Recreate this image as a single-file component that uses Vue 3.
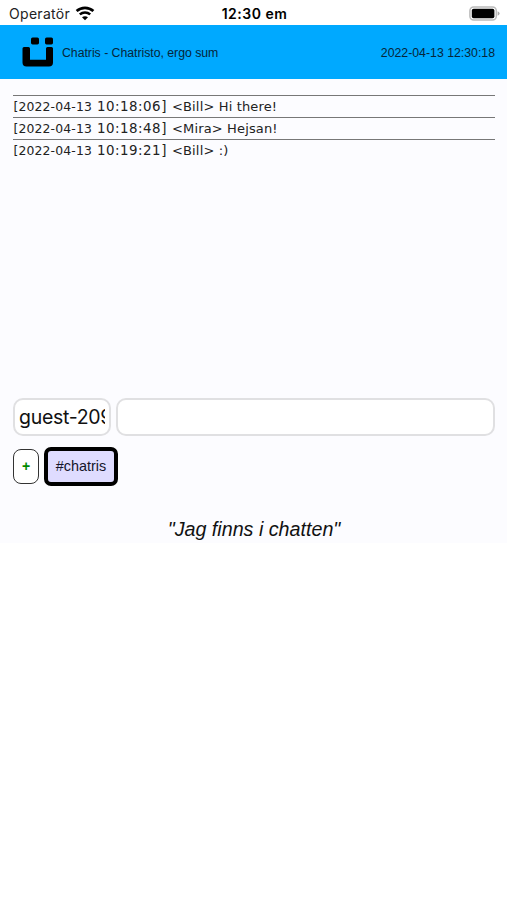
<script setup>
import { ref } from 'vue';

const nick = ref('guest-209');
const message = ref('');
const clock = ref('2022-04-13 12:30:18');

const messages = ref([
  { date: '2022-04-13', time: '10:18:06', nick: 'Bill', text: 'Hi there!' },
  { date: '2022-04-13', time: '10:18:48', nick: 'Mira', text: 'Hejsan!' },
  { date: '2022-04-13', time: '10:19:21', nick: 'Bill', text: ':)' },
]);
</script>

<template>
  <div class="screen">
    <div class="status">
      <div class="carrier">
        <span>Operatör</span>
        <svg width="20" height="15" viewBox="0 0 20 15">
          <path d="M1.6 5.1C6.4 0.8 13.6 0.8 18.4 5.1" fill="none" stroke="#000" stroke-width="2.7" />
          <path d="M4.8 8.4C7.8 5.8 12.2 5.8 15.2 8.4" fill="none" stroke="#000" stroke-width="2.5" />
          <path d="M10 14.2L7 11.3C8.7 9.8 11.3 9.8 13 11.3Z" />
        </svg>
      </div>
      <div class="time">12:30 em</div>
      <div class="battery">
        <svg width="31" height="15" viewBox="0 0 31 15">
          <rect x="0.9" y="0.9" width="26.4" height="13.2" rx="3.8" fill="#fff" stroke="#bbb" stroke-width="1.5" />
          <rect x="2.8" y="2.8" width="22.6" height="9.4" rx="1.8" />
          <path d="M28.6 5.2Q30.6 6 30.6 7.5T28.6 9.8Z" fill="#aaa" />
        </svg>
      </div>
    </div>

    <header>
      <svg width="32" height="30" viewBox="0 0 32 30">
        <rect x="9" y="0.6" width="8" height="6.8" rx="1.6" />
        <rect x="23" y="0.6" width="8" height="6.8" rx="1.6" />
        <path d="M2 10H6.5Q8 10 8 11.5V22.8H24V11.5Q24 10 25.5 10H29.5Q31 10 31 11.5V25.5Q31 29.5 27 29.5H4.5Q0.5 29.5 0.5 25.5V11.5Q0.5 10 2 10Z" />
      </svg>
      <span class="title">Chatris - Chatristo, ergo sum</span>
      <span class="clock">{{ clock }}</span>
    </header>

    <main>
      <div class="log">
        <div v-for="m in messages" :key="m.time" class="row">
          <span class="date">[{{ m.date }}</span>
          <span class="stamp">{{ m.time }}]</span>
          <span>&lt;{{ m.nick }}&gt; {{ m.text }}</span>
        </div>
      </div>

      <div class="inputs">
        <input v-model="nick" class="nick" type="text">
        <input v-model="message" class="message" type="text">
      </div>

      <div class="channels">
        <button class="add">+</button>
        <button class="channel">#chatris</button>
      </div>

      <p class="quote">"Jag finns i chatten"</p>
    </main>
  </div>
</template>

<style>
body {
  background: #fff;
}
</style>

<style scoped>
.screen {
  width: 507px;
  height: 900px;
  overflow: hidden;
  background: #fff;
  color: #000;
  font-family: "Liberation Sans", Arial, sans-serif;
}
.status {
  display: flex;
  align-items: center;
  height: 25px;
  padding: 1px 7px 0 9px;
  box-sizing: border-box;
  font-family: Inter, sans-serif;
  font-size: 14px;
}
.carrier {
  display: flex;
  flex: 1;
  align-items: center;
  gap: 5px;
  color: #222;
  letter-spacing: 0.3px;
}
.time {
  font-weight: 600;
  letter-spacing: 0.5px;
}
.battery {
  display: flex;
  flex: 1;
  justify-content: flex-end;
}
header {
  display: flex;
  align-items: center;
  height: 54px;
  padding: 0 12px 0 22px;
  box-sizing: border-box;
  background: #00a9ff;
  color: #06263a;
  font-size: 12.3px;
}
.title,
.clock {
  padding-top: 1px;
}
.title {
  margin-left: 8px;
  letter-spacing: -0.03px;
}
.clock {
  margin-left: auto;
}
main {
  height: 464px;
  padding: 16px 12px 0 13px;
  box-sizing: border-box;
  background: #fcfcff;
}
.log {
  height: 303px;
}
.row {
  display: flex;
  height: 22px;
  border-top: 1px solid #777;
  box-sizing: border-box;
  font-family: "DejaVu Sans", Verdana, sans-serif;
  font-size: 13px;
  line-height: 21px;
  letter-spacing: 0.15px;
  color: #222;
  white-space: nowrap;
}
.date {
  width: 84px;
  padding-left: 0.5px;
  box-sizing: border-box;
  font-size: 12.4px;
}
.stamp {
  width: 75px;
  font-size: 13.4px;
  letter-spacing: 0.5px;
}
.inputs {
  display: flex;
  gap: 5px;
}
input {
  height: 38px;
  padding: 0 5px;
  box-sizing: border-box;
  border: 2px solid #e0e0e2;
  border-radius: 10px;
  background: #fff;
  color: #111;
  font-family: Inter, sans-serif;
  font-size: 19.5px;
  letter-spacing: -0.3px;
  outline: none;
}
.nick {
  width: 98px;
  padding: 0 4px;
}
.message {
  flex: 1;
}
.channels {
  display: flex;
  align-items: center;
  gap: 5px;
  height: 40px;
  margin-top: 10px;
}
button {
  padding: 0;
  box-sizing: border-box;
  font-family: "Liberation Sans", Arial, sans-serif;
  font-size: 14px;
}
.add {
  width: 26px;
  height: 35px;
  border: 1.5px solid #333;
  border-radius: 8px;
  background: #fff;
  color: #008a00;
  font-weight: bold;
}
.channel {
  width: 74px;
  height: 39px;
  border: 4px solid #000;
  border-radius: 7px;
  background: #dfdcff;
  color: #15152a;
  font-size: 14.4px;
}
.quote {
  margin: 32px 0 0;
  font-size: 19.7px;
  font-style: italic;
  line-height: 23px;
  text-align: center;
  color: #111;
}
</style>
